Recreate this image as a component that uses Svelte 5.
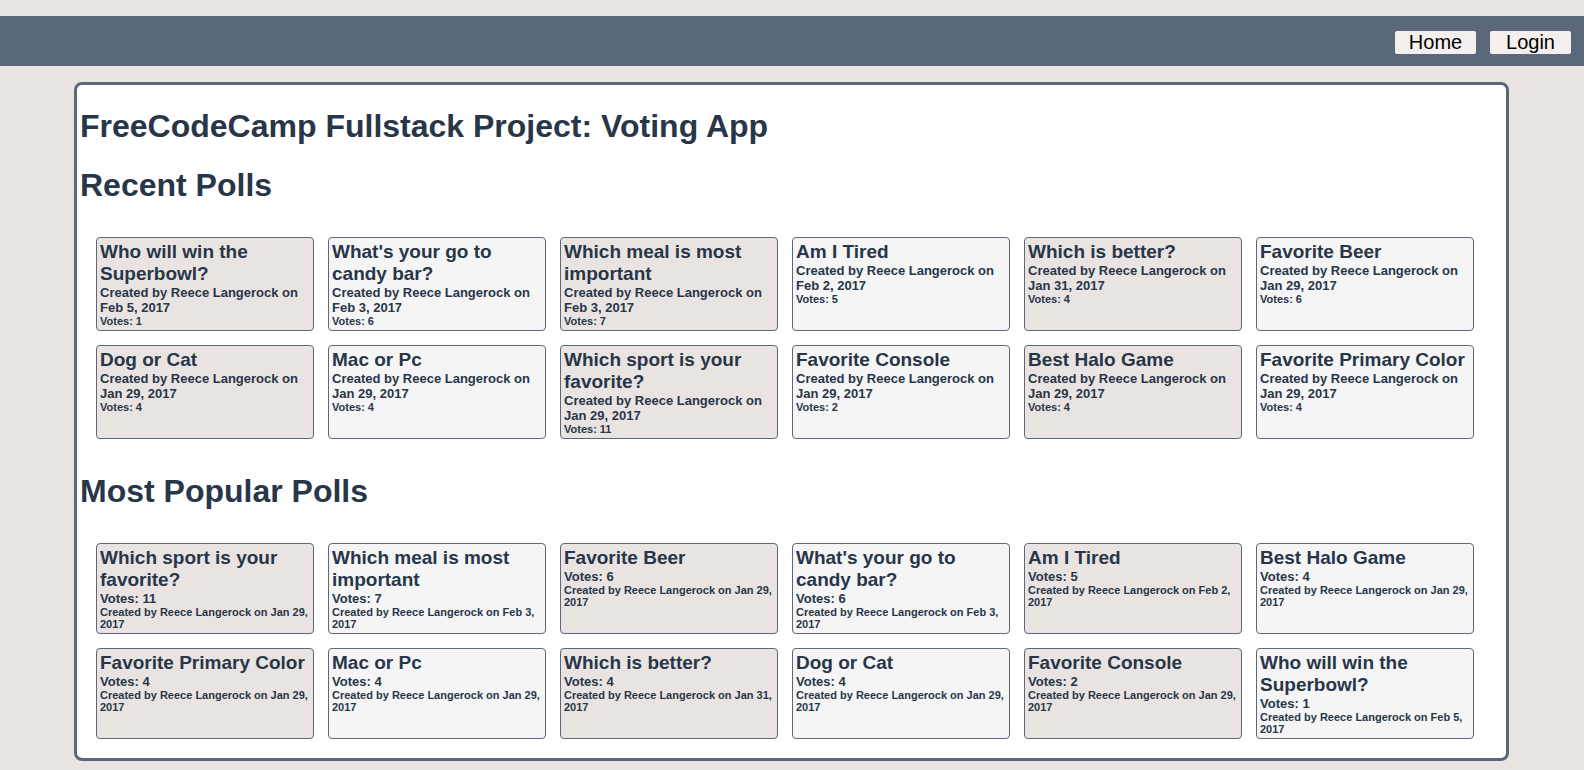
<script>
  const recent = [
    ['Who will win the Superbowl?', 'Feb 5, 2017', 1],
    ["What's your go to candy bar?", 'Feb 3, 2017', 6],
    ['Which meal is most important', 'Feb 3, 2017', 7],
    ['Am I Tired', 'Feb 2, 2017', 5],
    ['Which is better?', 'Jan 31, 2017', 4],
    ['Favorite Beer', 'Jan 29, 2017', 6],
    ['Dog or Cat', 'Jan 29, 2017', 4],
    ['Mac or Pc', 'Jan 29, 2017', 4],
    ['Which sport is your favorite?', 'Jan 29, 2017', 11],
    ['Favorite Console', 'Jan 29, 2017', 2],
    ['Best Halo Game', 'Jan 29, 2017', 4],
    ['Favorite Primary Color', 'Jan 29, 2017', 4]
  ];

  // Indexes into the recent list, ordered by votes
  const popular = [8, 2, 5, 1, 3, 10, 11, 7, 4, 6, 9, 0].map((i) => recent[i]);
</script>

<div class="page">
  <nav>
    <button type="button">Home</button>
    <button type="button">Login</button>
  </nav>

  <main>
    <h1>FreeCodeCamp Fullstack Project: Voting App</h1>

    <section>
      <h2>Recent Polls</h2>
      <div class="polls">
        {#each recent as [title, date, votes]}
          <article>
            <h3>{title}</h3>
            <p class="primary">Created by Reece Langerock on {date}</p>
            <p class="secondary">Votes: {votes}</p>
          </article>
        {/each}
      </div>
    </section>

    <section>
      <h2>Most Popular Polls</h2>
      <div class="polls">
        {#each popular as [title, date, votes]}
          <article>
            <h3>{title}</h3>
            <p class="primary">Votes: {votes}</p>
            <p class="secondary">Created by Reece Langerock on {date}</p>
          </article>
        {/each}
      </div>
    </section>
  </main>
</div>

<style>
  :global(body) {
    background: #e9e4e1;
  }

  .page {
    padding: 16px 0 9px;
    font-family: 'Liberation Sans', Arial, sans-serif;
    color: #283649;
  }

  nav {
    display: flex;
    justify-content: flex-end;
    align-items: center;
    gap: 14px;
    height: 50px;
    box-sizing: border-box;
    padding: 2px 13px 0;
    background: #5b677a;
  }

  button {
    width: 81px;
    height: 23px;
    padding: 0;
    border: 0;
    border-radius: 2px;
    background: #f5f0ee;
    color: #000;
    font-family: inherit;
    font-size: 20px;
    line-height: 23px;
  }

  main {
    margin: 16px 75px 0 74px;
    padding: 1px 3px 7px;
    border: 3px solid #5b677a;
    border-radius: 8px;
    background: #fff;
  }

  h1,
  h2 {
    margin: 22px 0;
    font-size: 32px;
    line-height: 37px;
  }

  .polls {
    display: grid;
    grid-template-columns: repeat(6, minmax(0, 1fr));
    gap: 14px;
    padding: 11px 29px 12px 16px;
  }

  article {
    padding: 3px;
    border: 1px solid #5b677a;
    border-radius: 4px;
    background: #f5f5f5;
  }

  article:nth-child(odd) {
    background: #e9e4e1;
  }

  h3,
  p {
    margin: 0;
    font-weight: bold;
  }

  h3 {
    font-size: 19px;
    line-height: 22px;
  }

  .primary {
    font-size: 13px;
    line-height: 15px;
  }

  .secondary {
    font-size: 11px;
    line-height: 12px;
  }
</style>
